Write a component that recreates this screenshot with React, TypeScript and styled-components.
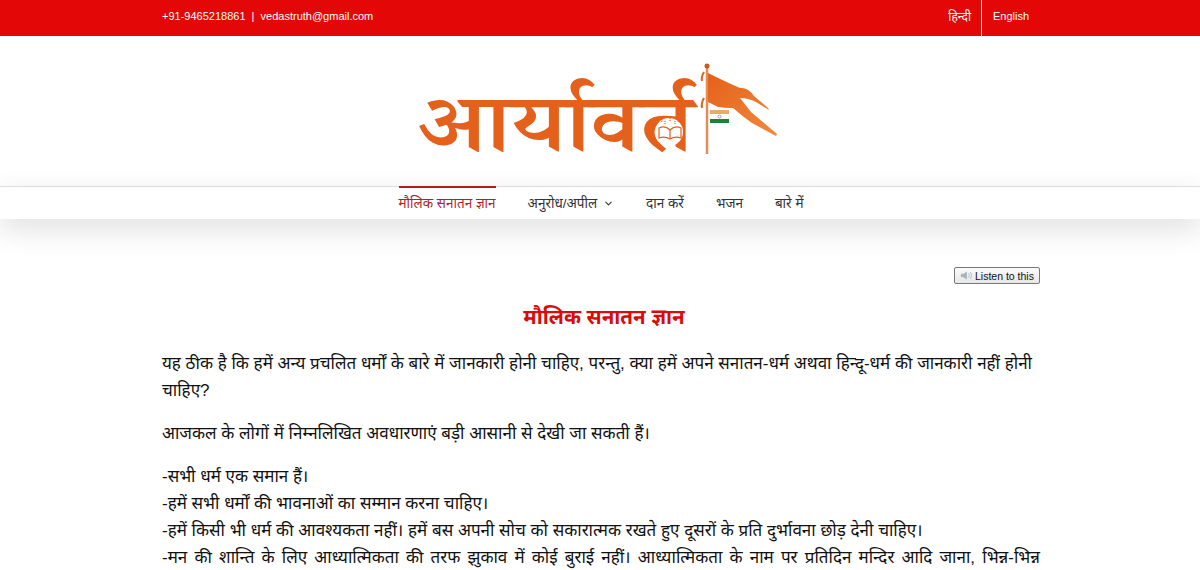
import React from "react";
import styled, { createGlobalStyle } from "styled-components";
import { ChevronDown } from "lucide-react";

const Global = createGlobalStyle`
  html, body { margin: 0; padding: 0; background: #fff; overflow: hidden; height: 570px; }
  body { font-family: "Liberation Sans", "Noto Sans", Arial, sans-serif; color: #000; }
  * { box-sizing: border-box; }
`;
const TopBar = styled.div`background: #e30707; height: 36px; color: #fff; font-size: 11px;`;
const TopInner = styled.div`width: 880px; padding-left: 2px; margin: 0 auto; height: 36px; display: flex; justify-content: space-between; align-items: stretch;`;
const Contact = styled.div`display: flex; align-items: center; padding-bottom: 4px;`;
const Langs = styled.div`display: flex;`;
const Lang = styled.a<{ $divider?: boolean }>`
  display: flex; align-items: center; padding: 0 ${p => (p.$divider ? "11px" : "10px")} 4px; color: #fff;
  font-size: ${p => (p.$divider ? "11px" : "12px")};
  ${p => (p.$divider ? "border-left: 1px solid #fff; width: 59px;" : "")}
`;
const Header = styled.header`height: 150px; display: flex; justify-content: center; align-items: flex-start; background: #fff;`;
const Logo = styled.div`width: 364px; height: 100px; margin-top: 24px; position: relative;`;
const LogoWord = styled.span`
  position: absolute; left: 0; top: 29px; font-size: 82px; line-height: 100px; font-weight: 600; color: #e5601b; white-space: nowrap;
  font-family: "Noto Serif Devanagari", "Noto Sans Devanagari", "Liberation Serif", serif;
  transform: scaleX(1.16); transform-origin: left center;
`;
const LogoArt = styled.svg`position: absolute; right: 0; top: 0;`;
const Nav = styled.nav`
  height: 33px; border-top: 1px solid #ddd; background: #fff; display: flex; justify-content: center; position: relative;
  box-shadow: 0 10px 30px rgba(0,0,0,.13);
`;
const NavList = styled.ul`list-style: none; display: flex; margin: 0; padding: 0 0 0 2px; gap: 32px; font-size: 13.5px;`;
const NavItem = styled.li<{ $active?: boolean }>`
  display: flex; align-items: center; height: 32px; gap: 6px; margin-top: -1px; color: ${p => (p.$active ? "#b31e1e" : "#333")};
  border-top: 2px solid ${p => (p.$active ? "#b31e1e" : "transparent")};
`;
const Main = styled.main`width: 880px; padding-left: 2px; margin: 0 auto; padding-top: 48px;`;
const ListenRow = styled.div`display: flex; justify-content: flex-end; height: 17px;`;
const ListenBtn = styled.button`
  width: 86px; height: 17px; padding: 0 0 0 5px; display: flex; align-items: center; gap: 2px; font: 10.5px "Liberation Sans", sans-serif; color: #111;
  background: linear-gradient(#fafafa, #e8e8e8); border: 1px solid #777; border-radius: 2px;
`;
const Title = styled.h1`margin: 18px 0 0; padding-left: 6px; font-size: 20.5px; line-height: 30px; font-weight: 700; color: #d90b0b; text-align: center;`;
const Para = styled.p`margin: 0 0 16px; font-size: 17px; line-height: 27px; color: #111;`;
const JustifiedLine = styled.span`display: block; text-align: justify; text-align-last: justify;`;
const Body = styled.div`margin-top: 18px;`;

export default function App() {
  return (
    <>
      <Global />
      <TopBar>
        <TopInner>
          <Contact>+91-9465218861&nbsp; |&nbsp; vedastruth@gmail.com</Contact>
          <Langs>
            <Lang>हिन्दी</Lang>
            <Lang $divider>English</Lang>
          </Langs>
        </TopInner>
      </TopBar>
      <Header>
        <Logo>
          <LogoWord>आर्यावर्त</LogoWord>
          <LogoArt width="364" height="100" viewBox="0 0 364 100">
            <defs>
              <linearGradient id="flagFill" x1="0" y1="0" x2="1" y2="1">
                <stop offset="0" stopColor="#e5601b" />
                <stop offset="1" stopColor="#f08a3c" />
              </linearGradient>
            </defs>
            <circle cx="251" cy="72" r="14" fill="#fff" />
            <g stroke="#e5601b" fill="none" strokeWidth="1.200">
              <path d="M241 68q6 -3 11 2q5 -5 11 -2v10q-6 -2 -11 1q-5 -3 -11 -1z" fill="#fff" />
              <path d="M252 70v9" />
              <path d="M247 61v3M252 58v4M257 61v3M243 59l1 3M261 59l-1 3" strokeDasharray="1 1" />
            </g>
            <g transform="translate(274 0)">
              <path d="M15 4v90" stroke="#e98a55" strokeWidth="2.5" />
              <circle cx="15" cy="6" r="2.500" fill="#c9581c" />
              <path d="M12 12q-3 5 -2 9M12 38q-3 5 -2 10" stroke="#d9651f" strokeWidth="2" fill="none" />
              <path d="M16 13 Q34 22 48 28 Q56 27 62 36 L76 48 L77 50 L64 42 Q56 38 48 38 L59 52 L85 74 L84 76 L60 63 Q50 56 41 48 Q32 48 26 47 L16 42 Z" fill="url(#flagFill)" />
              <rect x="18" y="50" width="19" height="4" fill="#f0a868" />
              <rect x="18" y="54" width="19" height="5" fill="#fff" />
              <circle cx="27.500" cy="56.500" r="1.500" fill="none" stroke="#667" strokeWidth=".6" />
              <rect x="18" y="59" width="19" height="4" fill="#1a8436" />
            </g>
          </LogoArt>
        </Logo>
      </Header>
      <Nav>
        <NavList>
          <NavItem $active>मौलिक सनातन ज्ञान</NavItem>
          <NavItem>अनुरोध/अपील <ChevronDown size={11} strokeWidth={2.4} /></NavItem>
          <NavItem>दान करें</NavItem>
          <NavItem>भजन</NavItem>
          <NavItem>बारे में</NavItem>
        </NavList>
      </Nav>
      <Main>
        <ListenRow>
          <ListenBtn>
            <svg width="13" height="11" viewBox="0 0 15 11"><path d="M1 3.5h3L8 1v9L4 7.5H1z" fill="#aab4bd" /><path d="M10 3q1.5 2.500 0 5M12 1.500q3 4 0 8" stroke="#aab4bd" fill="none" /></svg>
            Listen to this
          </ListenBtn>
        </ListenRow>
        <Title>मौलिक सनातन ज्ञान</Title>
        <Body>
          <Para>यह ठीक है कि हमें अन्य प्रचलित धर्मों के बारे में जानकारी होनी चाहिए, परन्तु, क्या हमें अपने सनातन-धर्म अथवा हिन्दू-धर्म की जानकारी नहीं होनी चाहिए?</Para>
          <Para>आजकल के लोगों में निम्नलिखित अवधारणाएं बड़ी आसानी से देखी जा सकती हैं।</Para>
          <Para>
            -सभी धर्म एक समान हैं।<br />
            -हमें सभी धर्मों की भावनाओं का सम्मान करना चाहिए।<br />
            -हमें किसी भी धर्म की आवश्यकता नहीं। हमें बस अपनी सोच को सकारात्मक रखते हुए दूसरों के प्रति दुर्भावना छोड़ देनी चाहिए।
            <JustifiedLine>-मन की शान्ति के लिए आध्यात्मिकता की तरफ झुकाव में कोई बुराई नहीं। आध्यात्मिकता के नाम पर प्रतिदिन मन्दिर आदि जाना, भिन्न-भिन्न</JustifiedLine>
          </Para>
        </Body>
      </Main>
    </>
  );
}
